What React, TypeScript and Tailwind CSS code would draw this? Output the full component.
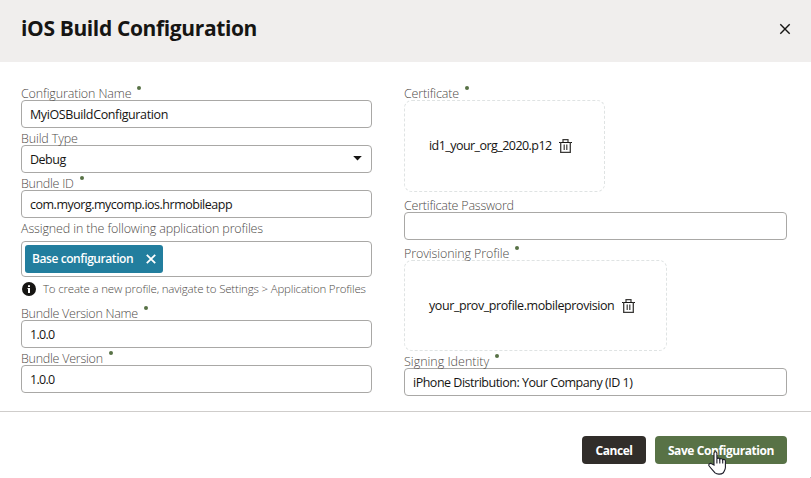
import type { ReactNode } from "react";

const font = "font-['Open_Sans','Noto_Sans',sans-serif]";

function Label({ children, tracking, required }: { children: ReactNode; tracking: string; required?: boolean }) {
  return (
    <div className="flex h-[17px] items-start whitespace-nowrap text-[12.5px] font-light leading-[21px] text-[#4f4c49]">
      <span className={tracking}>{children}</span>
      {required && <span className="ml-[6px] mt-[3px] h-1 w-1 rounded-full bg-[#587246]" />}
    </div>
  );
}

function Field({ value, tracking, caret }: { value?: string; tracking?: string; caret?: boolean }) {
  return (
    <div className="flex h-7 items-center justify-between rounded-[4px] border border-[#a9a8a6] bg-white pl-2 pr-[9px] text-[12.5px] leading-[24px] text-[#161513]">
      <span className={`whitespace-nowrap pt-[2px] ${tracking ?? ""}`}>{value}</span>
      {caret && (
        <svg width="9" height="5" viewBox="0 0 9 5" className="-mt-[2px]">
          <path d="M.2 0h8.600L4.500 4.400z" fill="#161513" />
        </svg>
      )}
    </div>
  );
}

function Trash() {
  return (
    <svg width="13" height="14" viewBox="0 0 13 14" fill="none" stroke="#3b3a38" className="shrink-0">
      <path d="M0 3.500h13" stroke="#161513" />
      <path d="M4 3V.7h5V3" strokeWidth="1.2" />
      <path d="M1.7 3v10.300h9.600V3" strokeWidth="1.3" />
      <path d="M5.200 5.5v5.5M7.800 5.5v5.5" strokeWidth="1.2" />
    </svg>
  );
}

function FileBox({ name, tracking, size }: { name: string; tracking: string; size: string }) {
  return (
    <div className={`flex items-center gap-[7.5px] rounded-[8px] border border-dashed border-[#dfe3e3] pl-6 text-[12.5px] text-[#161513] ${size}`}>
      <span className={`whitespace-nowrap pt-px ${tracking}`}>{name}</span>
      <Trash />
    </div>
  );
}

export default function App() {
  return (
    <div className={`relative flex h-[478px] w-[811px] flex-col overflow-hidden bg-white ${font}`}>
      <header className="flex h-[62px] items-center justify-between bg-[#f0eeed] pl-[21px] pr-5">
        <h1 className="-mt-[5px] whitespace-nowrap text-[21px] font-bold tracking-[-0.37px] text-[#161513]">iOS Build Configuration</h1>
        <svg width="12" height="12" viewBox="0 0 12 12" className="-mt-[4px]">
          <path d="M1.3 1.3l9.4 9.4M10.7 1.3l-9.4 9.4" stroke="#161513" strokeWidth="1.4" />
        </svg>
      </header>
      <main className="flex h-[349px] gap-8 pl-[21px] pt-[21px]">
        <section className="w-[351px]">
          <Label tracking="tracking-[-0.14px]" required>Configuration Name</Label>
          <Field value="MyiOSBuildConfiguration" tracking="tracking-[-0.38px]" />
          <Label tracking="tracking-[-0.13px]">Build Type</Label>
          <Field value="Debug" tracking="tracking-[-0.5px]" caret />
          <Label tracking="tracking-[-0.25px]" required>Bundle ID</Label>
          <Field value="com.myorg.mycomp.ios.hrmobileapp" tracking="tracking-[-0.49px]" />
          <div className="h-[23px]">
            <Label tracking="tracking-[-0.13px]">Assigned in the following application profiles</Label>
          </div>
          <div className="flex h-9 items-center rounded-[4px] border border-[#a9a8a6] pl-[3px]">
            <div className="flex h-7 w-[138px] items-center justify-between rounded-[3px] bg-[#227e9e] pl-[7px] pr-[7px] text-[12px] font-semibold text-white">
              <span className="whitespace-nowrap tracking-[-0.42px]">Base configuration</span>
              <svg width="10" height="10" viewBox="0 0 10 10" className="shrink-0">
                <path d="M.8.8l8.4 8.4M9.2.8L.8 9.2" stroke="#fff" strokeWidth="1.8" />
              </svg>
            </div>
          </div>
          <div className="flex h-[26px] items-center gap-[7px]">
            <svg width="14" height="14" viewBox="0 0 14 14" className="-mt-[2px] ml-[1px] shrink-0">
              <circle cx="7" cy="7" r="7" fill="#161513" />
              <path d="M6 3.200h2v1.800H6zM5.500 6h2.500v5H6V7.100h-.5z" fill="#fff" />
            </svg>
            <span className="-mt-[2px] whitespace-nowrap text-[11.5px] font-light tracking-[-0.18px] text-[#4f4c49]">To create a new profile, navigate to Settings &gt; Application Profiles</span>
          </div>
          <Label tracking="tracking-[-0.27px]" required>Bundle Version Name</Label>
          <Field value="1.0.0" tracking="tracking-[-0.7px]" />
          <Label tracking="tracking-[-0.25px]" required>Bundle Version</Label>
          <Field value="1.0.0" tracking="tracking-[-0.7px]" />
        </section>
        <section className="w-[383px]">
          <Label tracking="tracking-[-0.15px]" required>Certificate</Label>
          <FileBox name="id1_your_org_2020.p12" tracking="tracking-[-0.55px]" size="h-[92px] w-[201px]" />
          <div className="pt-[3px]">
            <Label tracking="tracking-[-0.22px]">Certificate Password</Label>
          </div>
          <Field />
          <div className="pt-[3px]">
            <Label tracking="tracking-[-0.1px]" required>Provisioning Profile</Label>
          </div>
          <FileBox name="your_prov_profile.mobileprovision" tracking="tracking-[-0.42px]" size="h-[91px] w-[263px]" />
          <Label tracking="tracking-[0px]" required>Signing Identity</Label>
          <Field value="iPhone Distribution: Your Company (ID 1)" tracking="tracking-[-0.49px]" />
        </section>
      </main>
      <footer className="flex grow items-start justify-end gap-[9px] border-t border-[#cfcdcb] pr-6 pt-6 text-[12px] font-bold text-white">
        <button className="flex h-7 w-16 items-center justify-center whitespace-nowrap rounded-[4px] bg-[#312d2a] pt-px tracking-[-0.43px]">Cancel</button>
        <button className="flex h-7 w-[132px] items-center justify-center whitespace-nowrap rounded-[4px] bg-[#587246] pt-px tracking-[-0.42px]">Save Configuration</button>
      </footer>
      <svg width="19" height="24" viewBox="0 0 19 24" className="absolute left-[708px] top-[451px]">
        <path d="M6 14V2.3C6 .3 8.900 .3 8.900 2.300V7.800c.5-1 2.700-.9 2.900.5.6-1 2.700-.8 2.900.6.8-.9 2.700-.5 2.700 1.300V16.500c0 2.500-1.400 3.500-2 5.200-2.500 1.900-6.300 1.900-8.400.2C5.200 19.500 2.800 17.500 1 14.800.2 13 2.300 11.600 3.800 12.900z" fill="#fff" stroke="#1c1c28" strokeWidth="1.100" />
        <path d="M8.900 7.800v4.700M11.800 8.500v4M14.700 9v3.500" stroke="#1c1c28" strokeWidth="1.100" />
      </svg>
      <span className="absolute bottom-0 right-0 h-px w-px bg-[#c4c4c4]" />
    </div>
  );
}
